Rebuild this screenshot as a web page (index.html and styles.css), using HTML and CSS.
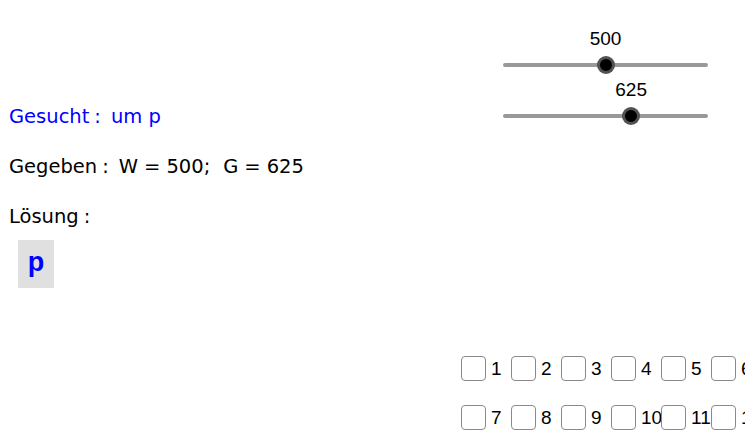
FILE: index.html
```html
<!DOCTYPE html>
<html>
<head>
<meta charset="utf-8">
<link rel="stylesheet" href="styles.css">
</head>
<body>
<div class="canvas">
  <div class="texts">
    <div class="line blue">Gesucht<span class="colon">:</span><span class="m">um p</span></div>
    <div class="line">Gegeben<span class="colon">:</span><span class="m">W<span class="eq">=</span>500;</span><span class="m2">G<span class="eq">=</span>625</span></div>
    <div class="line">Lösung<span class="colon">:</span></div>
    <div class="pbox">p</div>
  </div>

  <div class="slider s1">
    <div class="val" style="left: 50%">500</div>
    <div class="track"></div>
    <div class="knob" style="left: 50%"></div>
  </div>
  <div class="slider s2">
    <div class="val" style="left: 62.5%">625</div>
    <div class="track"></div>
    <div class="knob" style="left: 62.5%"></div>
  </div>

  <div class="checks">
    <div class="row">
      <div class="cb"><span class="box"></span><span class="lbl">1</span></div>
      <div class="cb"><span class="box"></span><span class="lbl">2</span></div>
      <div class="cb"><span class="box"></span><span class="lbl">3</span></div>
      <div class="cb"><span class="box"></span><span class="lbl">4</span></div>
      <div class="cb"><span class="box"></span><span class="lbl">5</span></div>
      <div class="cb"><span class="box"></span><span class="lbl">6</span></div>
    </div>
    <div class="row">
      <div class="cb"><span class="box"></span><span class="lbl">7</span></div>
      <div class="cb"><span class="box"></span><span class="lbl">8</span></div>
      <div class="cb"><span class="box"></span><span class="lbl">9</span></div>
      <div class="cb"><span class="box"></span><span class="lbl">10</span></div>
      <div class="cb"><span class="box"></span><span class="lbl">11</span></div>
      <div class="cb"><span class="box"></span><span class="lbl">12</span></div>
    </div>
  </div>
</div>
</body>
</html>
```

FILE: styles.css
```css
html, body {
  margin: 0;
  padding: 0;
  background: #ffffff;
}

.canvas {
  position: relative;
  width: 745px;
  height: 440px;
  overflow: hidden;
}

.texts {
  padding: 103px 0 0 9px;
  font-family: "DejaVu Sans", Lato, sans-serif;
  font-size: 19.5px;
  color: #000;
}

.line {
  height: 50px;
  line-height: 28px;
  white-space: pre;
}

.colon {
  margin-left: 5px;
}

.m {
  margin-left: 10px;
}

.m2 {
  margin-left: 13px;
}

.eq {
  margin: 0 6px;
}

.blue {
  color: #0000ff;
}

.pbox {
  margin: -13px 0 0 9px;
  width: 36px;
  height: 48px;
  background: #e0e0e0;
  color: #0000ff;
  font-family: "Liberation Sans", Arial, sans-serif;
  font-weight: bold;
  font-size: 27px;
  line-height: 44px;
  text-align: center;
}

.slider {
  position: absolute;
  left: 503px;
  width: 205px;
  height: 40px;
}

.s1 { top: 25px; }
.s2 { top: 76px; }

.val {
  position: absolute;
  top: 3px;
  transform: translateX(-50%);
  font-family: "Liberation Sans", Arial, sans-serif;
  font-size: 19px;
  color: #000;
}

.track {
  position: absolute;
  left: 0;
  right: 0;
  top: 38px;
  height: 4px;
  border-radius: 2px;
  background: #999999;
}

.knob {
  position: absolute;
  top: 40px;
  width: 12px;
  height: 12px;
  margin: -9px 0 0 -9px;
  border-radius: 50%;
  background: #000;
  border: 3px solid rgba(110, 110, 110, 0.75);
}

.checks {
  position: absolute;
  left: 461px;
  top: 356px;
  display: flex;
  flex-direction: column;
  gap: 24px;
}

.row {
  display: flex;
}

.cb {
  width: 50px;
  height: 25px;
  display: flex;
  align-items: center;
}

.box {
  box-sizing: border-box;
  width: 25px;
  height: 25px;
  border: 1.5px solid #8a8a8a;
  border-radius: 4px;
  background: #fff;
  flex: none;
}

.lbl {
  margin-left: 5px;
  font-family: "Liberation Sans", Arial, sans-serif;
  font-size: 19px;
  color: #000;
  white-space: nowrap;
}
```
